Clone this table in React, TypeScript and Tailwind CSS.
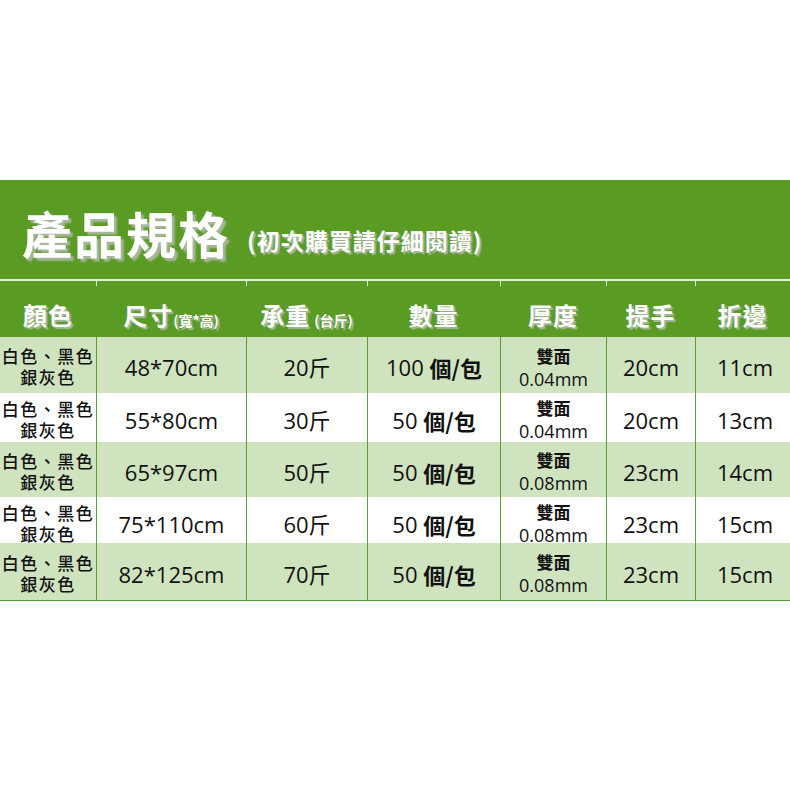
import React from "react";

const LATIN = "font-['Open_Sans','Noto_Sans_CJK_TC',sans-serif]";
const CJK = "font-['Noto_Sans_CJK_TC','Noto_Sans',sans-serif]";

const rows = [
  { size: "48*70cm", w: "20斤", q: "100", t: "0.04mm", h: "20cm", f: "11cm", bg: "bg-[#cfe3bf]", ht: "h-[56px]" },
  { size: "55*80cm", w: "30斤", q: "50", t: "0.04mm", h: "20cm", f: "13cm", bg: "bg-white", ht: "h-[49px]" },
  { size: "65*97cm", w: "50斤", q: "50", t: "0.08mm", h: "23cm", f: "14cm", bg: "bg-[#cfe3bf]", ht: "h-[55px]" },
  { size: "75*110cm", w: "60斤", q: "50", t: "0.08mm", h: "23cm", f: "15cm", bg: "bg-white", ht: "h-[46px]" },
  { size: "82*125cm", w: "70斤", q: "50", t: "0.08mm", h: "23cm", f: "15cm", bg: "bg-[#cfe3bf]", ht: "h-[57px]" },
];

const grid = "grid grid-cols-[96px_150px_121px_133px_106px_89px_95px]";
const shadow = "[text-shadow:3px_3px_2px_#a9b79d]";
const shadowSm = "[text-shadow:2px_2px_1px_#a9b79d]";

function Tick() {
  return <span className="absolute left-0 top-0 h-[5px] w-px bg-[#e2f0cf]" />;
}

export default function App() {
  return (
    <div className="w-[790px] h-[790px] bg-white flex flex-col">
      <div className="h-[180px]" />
      <div className="h-[99px] bg-[#5a9b24] flex items-center pl-[22px] pt-[4px]">
        <span className={`${CJK} text-[50px] font-bold text-white tracking-[2px] leading-none ${shadow}`}>產品規格</span>
        <span className={`${CJK} text-[23px] font-bold text-white ml-[17px] mt-[18px] leading-none tracking-[1px] ${shadowSm}`}>(初次購買請仔細閱讀)</span>
      </div>
      <div className="h-[2px] bg-[#e2f0cf]" />
      <div className={`${grid} h-[56px] bg-[#5a9b24] text-white ${CJK} font-bold`}>
        <div className="relative flex items-center justify-center pt-[12px]">
          <span className={`text-[24px] tracking-[1px] ${shadowSm}`}>顏色</span>
        </div>
        <div className="relative flex items-center justify-center pt-[12px]">
          <Tick />
          <span className={`text-[24px] tracking-[1px] ${shadowSm}`}>尺寸</span>
          <span className={`text-[14px] mt-[10px] ${shadowSm}`}>(寬*高)</span>
        </div>
        <div className="relative flex items-center justify-center pt-[12px]">
          <Tick />
          <span className={`text-[24px] tracking-[1px] ${shadowSm}`}>承重</span>
          <span className={`text-[14px] mt-[10px] ml-[4px] ${shadowSm}`}>(台斤)</span>
        </div>
        <div className="relative flex items-center justify-center pt-[12px]">
          <Tick />
          <span className={`text-[24px] tracking-[1px] ${shadowSm}`}>數量</span>
        </div>
        <div className="relative flex items-center justify-center pt-[12px]">
          <Tick />
          <span className={`text-[24px] tracking-[1px] ${shadowSm}`}>厚度</span>
        </div>
        <div className="relative flex items-center justify-center pt-[12px]">
          <Tick />
          <span className={`text-[24px] tracking-[1px] ${shadowSm}`}>提手</span>
        </div>
        <div className="relative flex items-center justify-center pt-[12px]">
          <Tick />
          <span className={`text-[24px] tracking-[1px] ${shadowSm}`}>折邊</span>
        </div>
      </div>
      <div className="flex flex-col border-b border-[#5e9c3a]">
        {rows.map((r, i) => (
          <div key={i} className={`${grid} ${r.ht} ${r.bg} text-[#111]`}>
            <div className={`flex flex-col items-center justify-center ${CJK} text-[17px] font-medium leading-[21px] tracking-[1.5px] pt-[2px]`}>
              <span>白色、黑色</span>
              <span>銀灰色</span>
            </div>
            <div className={`flex items-center justify-center border-l border-[#5e9c3a] ${LATIN} text-[22px] pt-[5px]`}>{r.size}</div>
            <div className={`flex items-center justify-center border-l border-[#5e9c3a] ${LATIN} text-[22px] pt-[5px]`}>{r.w}</div>
            <div className={`flex items-center justify-center border-l border-[#5e9c3a] ${LATIN} text-[22px] font-medium pt-[5px]`}>
              <span>{r.q}&nbsp;</span>
              <span className={`${CJK} font-bold`}>個/包</span>
            </div>
            <div className={`flex flex-col items-center justify-center border-l border-[#5e9c3a] pt-[3px]`}>
              <span className={`${CJK} text-[17px] font-bold leading-[24px]`}>雙面</span>
              <span className={`${LATIN} text-[18px] font-medium leading-[22px]`}>{r.t}</span>
            </div>
            <div className={`flex items-center justify-center border-l border-[#5e9c3a] ${LATIN} text-[22px] pt-[5px]`}>{r.h}</div>
            <div className={`flex items-center justify-center border-l border-[#5e9c3a] ${LATIN} text-[22px] pt-[5px] pl-[4px]`}>{r.f}</div>
          </div>
        ))}
      </div>
    </div>
  );
}
